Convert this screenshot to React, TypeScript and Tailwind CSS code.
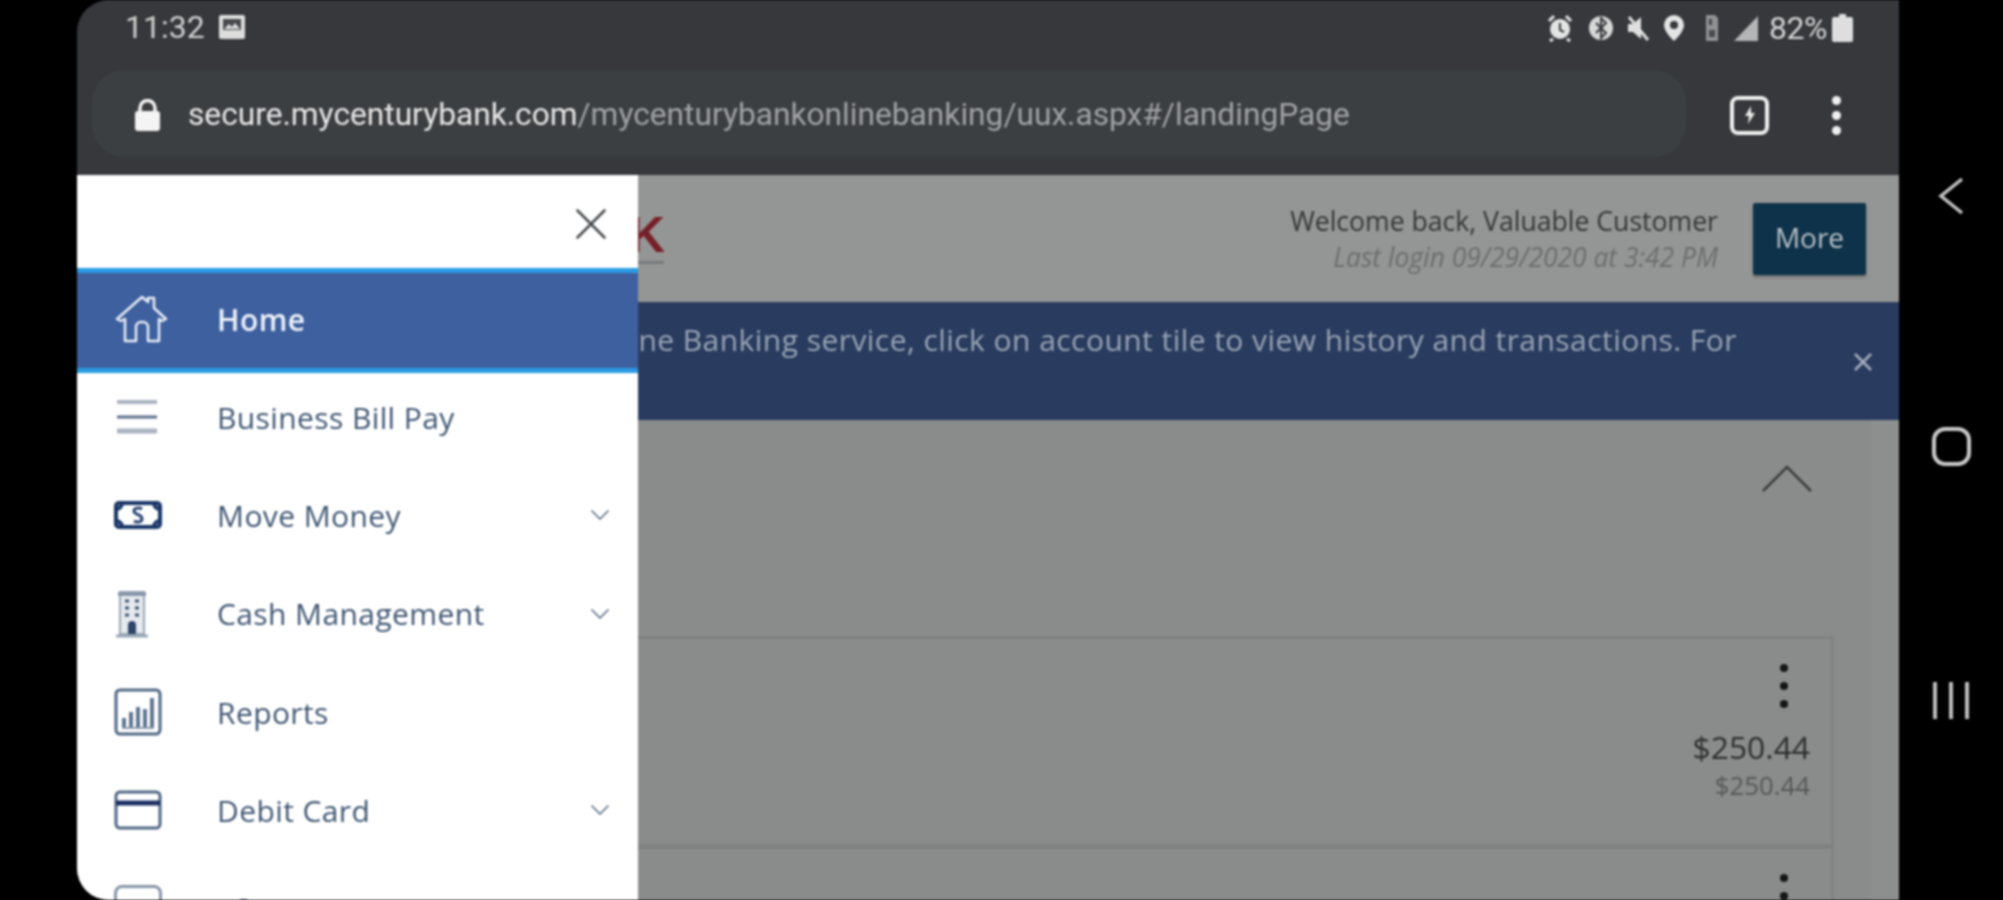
import { ChevronDown, X } from "lucide-react";
import type { ReactNode } from "react";

const menu: { label: string; icon: ReactNode; more?: boolean }[] = [
  { label: "Business Bill Pay", icon: <BarsIcon /> },
  { label: "Move Money", icon: <MoneyIcon />, more: true },
  { label: "Cash Management", icon: <BuildingIcon />, more: true },
  { label: "Reports", icon: <ReportIcon /> },
  { label: "Debit Card", icon: <CardIcon />, more: true },
  {
    label: "eStatements",
    icon: <div className="h-[48px] w-[48px] rounded-[8px] border-[3px] border-[#8796a8]" />,
  },
];

function BarsIcon() {
  return (
    <svg width="46" height="38" viewBox="0 0 46 38">
      <path d="M3 4h40" stroke="#a9b4c2" strokeWidth="4" />
      <path d="M3 19h40" stroke="#5d7088" strokeWidth="3" />
      <path d="M3 33h40" stroke="#a9b4c2" strokeWidth="5" />
    </svg>
  );
}

function MoneyIcon() {
  return (
    <svg width="48" height="30" viewBox="0 0 48 30" fill="none">
      <rect x="2" y="3" width="44" height="24" rx="3" stroke="#1b3768" strokeWidth="4" />
      <path d="M2 9a6 6 0 0 0 6-6M46 9a6 6 0 0 1-6-6M2 21a6 6 0 0 1 6 6M46 21a6 6 0 0 0-6 6" stroke="#1b3768" strokeWidth="4" />
      <path d="M28 9c-3-2-8-1-8 2 0 4 8 3 8 8 0 3-5 4-8 2" stroke="#2b4673" strokeWidth="3" />
    </svg>
  );
}

function BuildingIcon() {
  return (
    <svg width="36" height="48" viewBox="0 0 36 48" fill="none">
      <path d="M6 2h24v42H6z" fill="#e6eaee" stroke="#9aa7b6" strokeWidth="2" />
      <path d="M2 46h32" stroke="#9aa7b6" strokeWidth="3" />
      <path d="M4 4h28" stroke="#8796a8" strokeWidth="4" />
      <path d="M11 11h4M21 11h4M11 18h4M21 18h4M11 25h4M21 25h4" stroke="#3a5273" strokeWidth="3" />
      <path d="M14 44v-9a4 4 0 0 1 8 0v9z" fill="#2b4468" />
    </svg>
  );
}

function ReportIcon() {
  return (
    <svg width="48" height="48" viewBox="0 0 48 48" fill="none">
      <rect x="2" y="2" width="44" height="44" rx="4" stroke="#4f6784" strokeWidth="3" />
      <path d="M10 39v-9M17 39V24M24 39V19M31 39V21M38 39V10" stroke="#5f7590" strokeWidth="4" />
      <path d="M8 40h32" stroke="#8b9bae" strokeWidth="2" />
    </svg>
  );
}

function CardIcon() {
  return (
    <svg width="48" height="40" viewBox="0 0 48 40" fill="none">
      <rect x="2" y="2" width="44" height="36" rx="4" stroke="#4f6784" strokeWidth="3" />
      <path d="M2 13h44" stroke="#1b2f63" strokeWidth="5" />
    </svg>
  );
}

function HomeIcon() {
  return (
    <svg width="54" height="50" viewBox="0 0 54 50" fill="none" stroke="#e8edf6" strokeWidth="2.5" strokeLinejoin="round">
      <path d="M2 25 27 3l6 5V4h6v10l12 11-4 2-3-2v22H33V33a5 5 0 0 0-5-5h-2a5 5 0 0 0-5 5v14H10V25l-4 2z" />
    </svg>
  );
}

function StatusIcons() {
  return (
    <div className="flex items-center">
      <svg width="26" height="28" viewBox="0 0 26 28" className="mr-[15px]">
        <circle cx="13" cy="15" r="10" fill="#e4e4e4" />
        <path d="M2 7l5-5M24 7l-5-5M6 25l-3 2M20 25l3 2" stroke="#e4e4e4" strokeWidth="3" />
        <path d="M13 9v7l4 2" stroke="#36383c" strokeWidth="2" fill="none" />
      </svg>
      <svg width="26" height="28" viewBox="0 0 26 28" className="mr-[12px]">
        <circle cx="13" cy="14" r="12" fill="#d8d8d8" />
        <path d="M8 9l10 10-5 5V4l5 5L8 19" stroke="#36383c" strokeWidth="2" fill="none" />
      </svg>
      <svg width="24" height="28" viewBox="0 0 24 28" className="mr-[13px]">
        <path d="M2 10h5l8-7v22l-8-7H2z" fill="#e0e0e0" />
        <path d="M3 3l19 23" stroke="#e0e0e0" strokeWidth="3" />
      </svg>
      <svg width="22" height="28" viewBox="0 0 22 28" className="mr-[18px]">
        <path d="M11 1a10 10 0 0 0-10 10c0 7 10 16 10 16s10-9 10-16A10 10 0 0 0 11 1z" fill="#e4e4e4" />
        <circle cx="11" cy="11" r="4" fill="#36383c" />
      </svg>
      <svg width="18" height="28" viewBox="0 0 18 28" className="mr-[12px]">
        <path d="M3 1h9l3 3v23H3z" fill="#8f9193" />
        <path d="M6 5h3v6H6zM6 16h6v7H6z" fill="#47494c" />
      </svg>
      <svg width="26" height="28" viewBox="0 0 26 28" className="mr-[10px]">
        <path d="M25 2v25H1z" fill="#b4b5b6" />
      </svg>
      <span className="mr-[5px] font-['Roboto',sans-serif] text-[32px] leading-none tracking-[-0.5px] text-[#d4d4d4]">82%</span>
      <svg width="21" height="28" viewBox="0 0 21 28">
        <path d="M7 0h7v3h5a2 2 0 0 1 2 2v21a2 2 0 0 1-2 2H2a2 2 0 0 1-2-2V5a2 2 0 0 1 2-2h5z" fill="#dedede" />
      </svg>
    </div>
  );
}

export default function App() {
  return (
    <div className="h-[900px] w-[2003px] overflow-hidden bg-black">
      <div className="flex h-[900px] w-[2003px] overflow-hidden bg-black font-['Open_Sans',sans-serif] blur-[0.9px]">
        <div className="w-[77px] shrink-0" />

        <div className="relative flex w-[1822px] shrink-0 flex-col overflow-hidden rounded-l-[32px]">
          {/* browser chrome */}
          <div className="flex h-[175px] shrink-0 flex-col bg-[#36383c]">
            <div className="flex h-[70px] items-start justify-between pl-[48px] pr-[46px] pt-[12px]">
              <div className="flex items-center gap-[13px]">
                <span className="font-['Roboto',sans-serif] text-[32px] leading-[30px] text-[#d0d0d0]">11:32</span>
                <svg width="28" height="26" viewBox="0 0 28 26">
                  <rect x="1" y="1" width="26" height="24" rx="2" fill="#dcdcdc" />
                  <rect x="5" y="5" width="18" height="11" fill="#47494c" />
                  <path d="M6 15l5-5 3 3 3-4 5 6z" fill="#dcdcdc" />
                </svg>
              </div>
              <StatusIcons />
            </div>
            <div className="flex items-center pl-[15px]">
              <div className="flex h-[87px] w-[1594px] items-center rounded-[32px] bg-[#3c3f42] pl-[42px] pt-[3px]">
                <svg width="27" height="32" viewBox="0 0 27 32" className="mr-[27px]">
                  <path d="M6 14V9a7.5 7.5 0 0 1 15 0v5" fill="none" stroke="#f2f2f2" strokeWidth="3.5" />
                  <rect x="1" y="12" width="25" height="20" rx="3" fill="#f4f4f4" />
                </svg>
                <span className="whitespace-nowrap font-['Roboto',sans-serif] text-[31.7px] text-[#a0a2a4]">
                  <span className="text-[#e6e6e6]">secure.mycenturybank.com</span>/mycenturybankonlinebanking/uux.aspx#/landingPage
                </span>
              </div>
              <div className="ml-[44px] mt-[3px] flex h-[39px] w-[39px] items-center justify-center rounded-[8px] border-[4px] border-[#f0f0f0]">
                <svg width="14" height="20" viewBox="0 0 14 20">
                  <path d="M8 1 2 11h4l-1 8 7-11H8z" fill="#e8e8e8" />
                </svg>
              </div>
              <div className="ml-[63px] mt-[3px] flex flex-col gap-[6px]">
                <div className="h-[9px] w-[9px] rounded-full bg-[#f0f0f0]" />
                <div className="h-[9px] w-[9px] rounded-full bg-[#f0f0f0]" />
                <div className="h-[9px] w-[9px] rounded-full bg-[#f0f0f0]" />
              </div>
            </div>
          </div>

          {/* page behind the drawer */}
          <div className="flex h-[127px] shrink-0 items-center justify-between bg-[#949695] pl-[552px] pr-[33px]">
            <div className="flex flex-col">
              <span className="font-['Liberation_Sans',sans-serif] text-[50px] font-bold leading-[44px] text-[#762029]">K</span>
              <div className="mt-[4px] h-[3px] w-[35px] bg-[#777b7c]" />
            </div>
            <div className="flex items-center gap-[35px]">
              <div className="flex flex-col items-end">
                <span className="text-[26.6px] leading-[36px] text-[#353737]">Welcome back, Valuable Customer</span>
                <span className="text-[26.4px] italic leading-[36px] text-[#6c6e6e]">Last login 09/29/2020 at 3:42 PM</span>
              </div>
              <button className="flex h-[72px] w-[113px] items-center justify-center rounded-[2px] bg-[#0e3249] pb-[3px] text-[28px] text-[#b9c1c7] shadow-[0_2px_3px_rgba(0,0,0,0.3)]">
                More
              </button>
            </div>
          </div>

          <div className="flex h-[118px] shrink-0 items-start justify-end overflow-hidden bg-[#293c5f] pr-[162px] pt-[19px]">
            <span className="whitespace-nowrap text-[30px] leading-[38px] tracking-[0.45px] text-[#9aa4b4]">
              Online Banking service, click on account tile to view history and transactions. For
            </span>
          </div>
          <svg width="22" height="22" viewBox="0 0 22 22" className="absolute left-[1775px] top-[351px]">
            <path d="M3 3l16 16M19 3 3 19" stroke="#a4adbc" strokeWidth="2.5" />
          </svg>

          <div className="flex min-h-0 flex-1 overflow-hidden bg-[#8a8c8b]">
            <div className="flex flex-1 flex-col pr-[37px] pt-[45px]">
              <div className="flex justify-end pr-[22px]">
                <svg width="50" height="27" viewBox="0 0 50 27">
                  <path d="M1 26 25 2l24 24" fill="none" stroke="#3b3d3d" strokeWidth="2.5" />
                </svg>
              </div>
              <div className="mt-[144px] flex h-[217px] flex-col items-end border-r-[3px] border-t-[3px] border-[#808281] pr-[21px]">
                <div className="mr-[22px] mt-[25px] flex flex-col gap-[10px]">
                  <div className="h-[8px] w-[8px] rounded-full bg-[#141616]" />
                  <div className="h-[8px] w-[8px] rounded-full bg-[#141616]" />
                  <div className="h-[8px] w-[8px] rounded-full bg-[#141616]" />
                </div>
                <span className="mt-[20px] text-[31.8px] leading-[38px] text-[#2d2f2f]">$250.44</span>
                <span className="text-[25.8px] leading-[38px] text-[#565858]">$250.44</span>
              </div>
              <div className="flex flex-1 flex-col items-end border-r-[3px] border-t-[5px] border-[#808281] pr-[21px]">
                <div className="mr-[22px] mt-[25px] flex flex-col gap-[10px]">
                  <div className="h-[8px] w-[8px] rounded-full bg-[#141616]" />
                  <div className="h-[8px] w-[8px] rounded-full bg-[#141616]" />
                </div>
              </div>
            </div>
            <div className="w-[28px] shrink-0 bg-[#8d8f8e]" />
          </div>

          {/* drawer */}
          <div className="absolute bottom-0 left-0 top-[175px] flex w-[561px] flex-col overflow-hidden bg-white">
            <div className="flex h-[93px] shrink-0 items-start justify-end pr-[20px] pt-[22px]">
              <X size={54} strokeWidth={1.2} className="text-[#4c4e50]" />
            </div>
            <div className="flex h-[105px] shrink-0 items-center border-y-[5px] border-[#2a9be2] bg-[#3e609f]">
              <div className="flex w-[129px] justify-center pb-[4px]">
                <HomeIcon />
              </div>
              <span className="ml-[11px] pb-[2px] text-[30px] font-semibold tracking-[0.4px] text-[#eef2f8]">Home</span>
            </div>
            <div className="-mt-[5px] flex flex-col">
              {menu.map((item) => (
                <div key={item.label} className="flex h-[98.3px] shrink-0 items-center pr-[22px]">
                  <div className="flex w-[140px] justify-start pl-[37px]">{item.icon}</div>
                  <span className="flex-1 text-[30px] tracking-[0.4px] text-[#3f5672]">{item.label}</span>
                  {item.more && <ChevronDown size={32} strokeWidth={1.3} className="text-[#5d7088]" />}
                </div>
              ))}
            </div>
          </div>
        </div>

        {/* android nav */}
        <div className="flex flex-1 flex-col items-center pt-[177px]">
          <svg width="26" height="38" viewBox="0 0 26 38">
            <path d="M24 2 3 19l21 17" fill="none" stroke="#c2c2c2" strokeWidth="3.5" />
          </svg>
          <div className="mt-[212px] h-[39px] w-[39px] rounded-[13px] border-[4px] border-[#c8c8c8]" />
          <div className="mt-[216px] flex h-[37px] w-[36px] justify-between">
            <div className="h-full w-[4px] bg-[#bdbdbd]" />
            <div className="h-full w-[4px] bg-[#bdbdbd]" />
            <div className="h-full w-[4px] bg-[#bdbdbd]" />
          </div>
        </div>
      </div>
    </div>
  );
}
